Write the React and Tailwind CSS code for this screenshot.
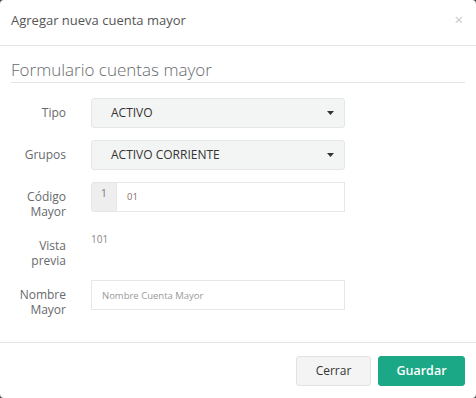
import React from "react";

function Caret() {
  return (
    <svg width="7" height="4" viewBox="0 0 7 4" className="shrink-0">
      <path d="M0 0 L7 0 L3.5 4 Z" fill="#333" />
    </svg>
  );
}

function Row({ label, children }) {
  return (
    <div className="flex mb-[12px]">
      <label className="w-[55px] text-right text-[12px] leading-[15px] text-[#676a6c] pt-[7px]">
        {label}
      </label>
      <div className="ml-[25px] w-[254px]">{children}</div>
    </div>
  );
}

function Select({ value }) {
  return (
    <div className="h-[30px] flex items-center justify-between bg-[#f3f4f4] border border-[#e5e6e7] rounded-[3px] pl-[19px] pr-[10px]">
      <span className="text-[12px] text-[#333]">{value}</span>
      <Caret />
    </div>
  );
}

export default function App() {
  return (
    <div
      className="w-[476px] h-[398px] bg-[#4a4a4a]"
      style={{ fontFamily: '"Open Sans", sans-serif' }}
    >
      <div className="w-full h-full bg-white rounded-[4px] flex flex-col">
        {/* header */}
        <div className="h-[46px] border-b border-[#e5e5e5] flex items-center justify-between pl-[11px] pr-[13px] pb-[4px]">
          <h4 className="text-[13px] text-[#555]">Agregar nueva cuenta mayor</h4>
          <span className="text-[15px] text-[#c8c8c8] leading-none mb-[3px]">×</span>
        </div>

        {/* body */}
        <div className="flex-1 px-[11px] pt-[12px]">
          <div className="border-b border-[#e5e5e5] pb-[1px] mb-[15px]">
            <h3 className="text-[17px] font-light text-[#676a6c] leading-[23px]">
              Formulario cuentas mayor
            </h3>
          </div>

          <Row label="Tipo">
            <Select value="ACTIVO" />
          </Row>
          <Row label="Grupos">
            <Select value="ACTIVO CORRIENTE" />
          </Row>
          <Row label={<>Código<br />Mayor</>}>
            <div className="flex h-[30px]">
              <div className="w-[26px] bg-[#eee] border border-[#e5e6e7] rounded-l-[3px] text-center text-[11px] text-[#8a7a70] leading-[15px] pt-[2px]">
                1
              </div>
              <input
                readOnly
                value="01"
                className="flex-1 min-w-0 border border-l-0 border-[#e5e6e7] pl-[10px] text-[9.5px] text-[#8a6d5e] outline-none"
              />
            </div>
          </Row>
          <Row label={<>Vista<br />previa</>}>
            <div className="text-[10px] text-[#888] leading-[15px] pt-[1px]">101</div>
          </Row>
          <Row label={<>Nombre<br />Mayor</>}>
            <input
              placeholder="Nombre Cuenta Mayor"
              className="w-full h-[30px] border border-[#e5e6e7] pl-[10px] text-[9.5px] placeholder:text-[#999] outline-none"
            />
          </Row>
        </div>

        {/* footer */}
        <div className="border-t border-[#e5e5e5] flex justify-end gap-[7px] pt-[13px] pb-[12px] pr-[11px]">
          <button className="w-[75px] h-[30px] bg-[#f4f4f4] border border-[#e2e2e2] rounded-[3px] text-[12px] text-[#333]">
            Cerrar
          </button>
          <button className="w-[87px] h-[30px] bg-[#1aa886] border border-[#1aa886] rounded-[3px] text-[12.5px] text-white font-semibold">
            Guardar
          </button>
        </div>
      </div>
    </div>
  );
}
